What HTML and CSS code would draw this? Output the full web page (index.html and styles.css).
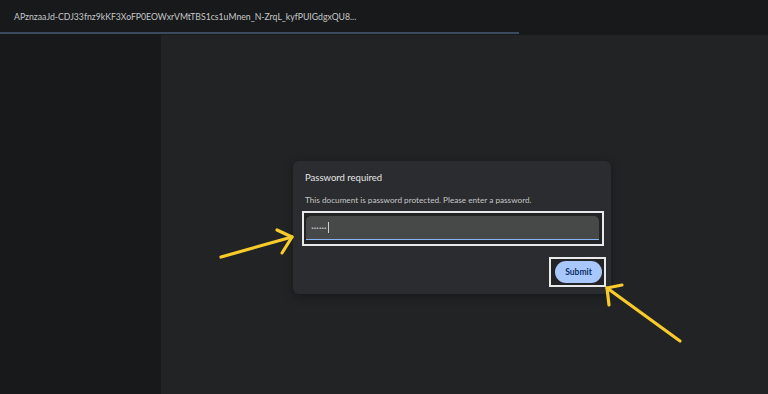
FILE: index.html
```html
<!DOCTYPE html>
<html lang="en">
<head>
  <meta charset="UTF-8">
  <title>Password required</title>
  <link rel="stylesheet" href="styles.css">
</head>
<body>
  <header class="topbar">
    <div class="doc-title">APznzaaJd-CDJ33fnz9kKF3XoFP0EOWxrVMtTBS1cs1uMnen_N-ZrqL_kyfPUIGdgxQU8...</div>
    <div class="progress"><div class="progress-fill"></div></div>
  </header>

  <div class="content">
    <aside class="sidebar"></aside>
    <main class="viewer">
      <div class="dialog">
        <h1>Password required</h1>
        <p>This document is password protected. Please enter a password.</p>

        <!-- highlighted field -->
        <div class="mark mark-input">
          <div class="field"><span class="dots">••••••</span><span class="caret"></span></div>
        </div>

        <div class="actions">
          <div class="mark mark-btn">
            <button type="button">Submit</button>
          </div>
        </div>
      </div>
    </main>
  </div>

  <!-- annotation arrows -->
  <svg class="arrows" width="768" height="394" viewBox="0 0 768 394">
    <g fill="none" stroke="#f7cb2a" stroke-width="3.2" stroke-linecap="round" stroke-linejoin="round">
      <path d="M221 257 L292 237"/>
      <path d="M277 230 L292 237 L282 253"/>
      <path d="M680 341 L607 288"/>
      <path d="M622 285 L607 288 L609 305"/>
    </g>
  </svg>
</body>
</html>
```

FILE: styles.css
```css
body {
  margin: 0;
  width: 768px;
  height: 394px;
  overflow: hidden;
  background: #222325;
  font-family: Lato, "Noto Sans", sans-serif;
  color: #e3e3e3;
  display: flex;
  flex-direction: column;
}
.topbar {
  background: #18191b;
  height: 35px;
  display: flex;
  flex-direction: column;
}
.doc-title {
  flex: 1;
  display: flex;
  align-items: center;
  padding-left: 14px;
  font-size: 8.7px;
  color: #c6c7c9;
}
.progress {
  height: 3px;
}
.progress-fill {
  width: 519px;
  height: 2px;
  background: #3b4a5c;
}
.content {
  flex: 1;
  display: flex;
}
.sidebar {
  width: 161px;
  background: #18191b;
}
.viewer {
  flex: 1;
  padding: 126px 0 0 132px;
}
.dialog {
  width: 318px;
  box-sizing: border-box;
  padding: 9px 12px 7px;
  background: #2b2c2f;
  border-radius: 6px;
  box-shadow: 0 2px 10px rgba(0,0,0,0.35);
}
h1 {
  margin: 0;
  font-size: 9.5px;
  font-weight: normal;
  color: #e6e6e6;
  line-height: 16px;
}
p {
  margin: 8px 0 0;
  font-size: 8.2px;
  color: #c4c5c7;
  line-height: 12px;
}
.mark {
  border: 2px solid #e9e9e9;
  background: #222325;
  box-sizing: border-box;
}
.mark-input {
  margin: 5px -5px 0 -3px;
  padding: 3px 3px 4px 2px;
}
.field {
  height: 24px;
  background: #474948;
  border-radius: 5px 5px 0 0;
  border-bottom: 1px solid #8ab4f8;
  box-sizing: border-box;
  display: flex;
  align-items: center;
  padding-left: 5px;
}
.dots {
  font-family: "DejaVu Sans", sans-serif;
  font-size: 5px;
  letter-spacing: -0.4px;
  color: #e8e8e8;
}
.caret {
  width: 1px;
  height: 11px;
  background: #d0d0d0;
  margin-left: 2px;
}
.actions {
  display: flex;
  justify-content: flex-end;
  margin: 11px -7px 0 0;
}
.mark-btn {
  padding: 2px 2px 2px 4px;
}
button {
  width: 47px;
  height: 22px;
  border: none;
  border-radius: 11px;
  background: #a8c7fa;
  color: #0b2f6b;
  font-family: Lato, "Noto Sans", sans-serif;
  font-size: 8.5px;
  font-weight: bold;
  padding: 0;
  display: block;
}
.arrows {
  position: absolute;
  top: 0;
  left: 0;
  pointer-events: none;
}
```
